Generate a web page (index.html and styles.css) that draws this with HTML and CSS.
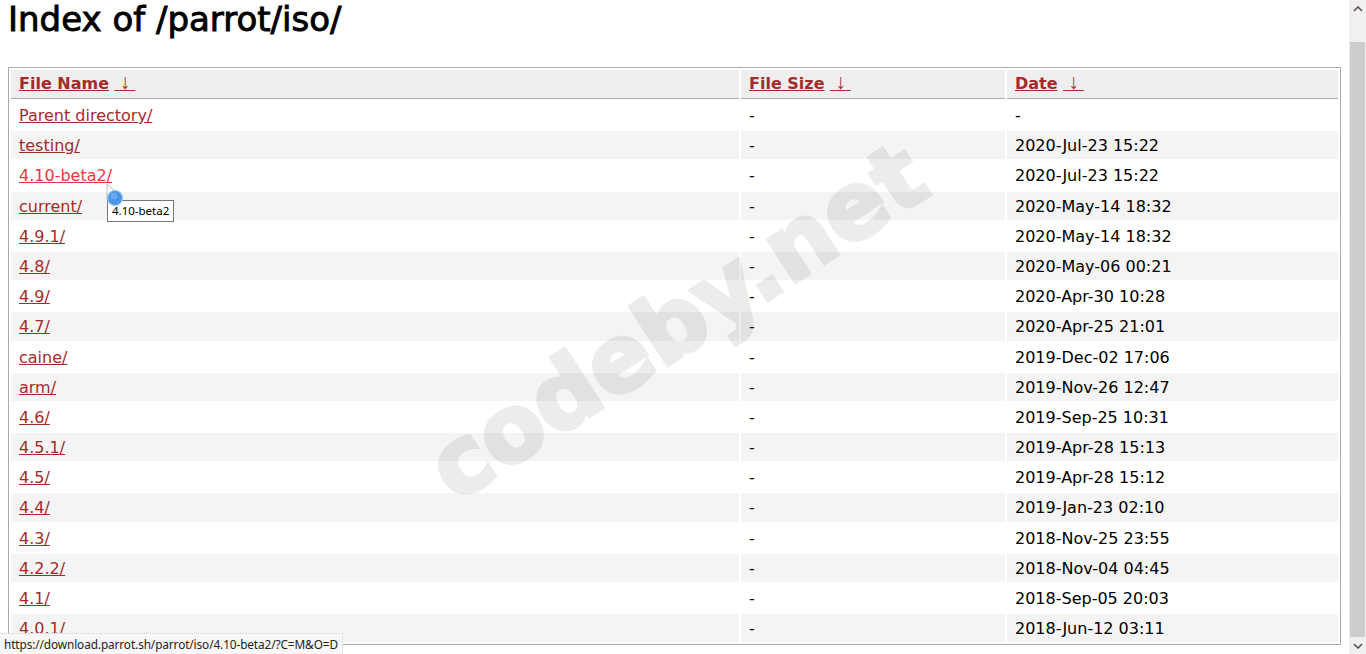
FILE: index.html
```html
<!DOCTYPE html>
<html lang="en">
<head>
<meta charset="utf-8">
<title>Index of /parrot/iso/</title>
<link rel="stylesheet" href="styles.css">
</head>
<body>
<h1 class="title">Index of /parrot/iso/</h1>
<table class="listing">
  <colgroup>
    <col class="c-name"><col class="c-size"><col class="c-date">
  </colgroup>
  <thead>
    <tr>
      <th><a href="#">File Name</a> <a href="#" class="arrow">&nbsp;<span class="ar">↓</span>&nbsp;</a></th>
      <th><a href="#">File Size</a> <a href="#" class="arrow">&nbsp;<span class="ar">↓</span>&nbsp;</a></th>
      <th><a href="#">Date</a> <a href="#" class="arrow">&nbsp;<span class="ar">↓</span>&nbsp;</a></th>
    </tr>
  </thead>
  <tbody>
    <tr><td><a href="#">Parent directory/</a></td><td>-</td><td>-</td></tr>
    <tr><td><a href="#">testing/</a></td><td>-</td><td>2020-Jul-23 15:22</td></tr>
    <tr><td><a href="#" class="hover">4.10-beta2/</a></td><td>-</td><td>2020-Jul-23 15:22</td></tr>
    <tr><td><a href="#">current/</a></td><td>-</td><td>2020-May-14 18:32</td></tr>
    <tr><td><a href="#">4.9.1/</a></td><td>-</td><td>2020-May-14 18:32</td></tr>
    <tr><td><a href="#">4.8/</a></td><td>-</td><td>2020-May-06 00:21</td></tr>
    <tr><td><a href="#">4.9/</a></td><td>-</td><td>2020-Apr-30 10:28</td></tr>
    <tr><td><a href="#">4.7/</a></td><td>-</td><td>2020-Apr-25 21:01</td></tr>
    <tr><td><a href="#">caine/</a></td><td>-</td><td>2019-Dec-02 17:06</td></tr>
    <tr><td><a href="#">arm/</a></td><td>-</td><td>2019-Nov-26 12:47</td></tr>
    <tr><td><a href="#">4.6/</a></td><td>-</td><td>2019-Sep-25 10:31</td></tr>
    <tr><td><a href="#">4.5.1/</a></td><td>-</td><td>2019-Apr-28 15:13</td></tr>
    <tr><td><a href="#">4.5/</a></td><td>-</td><td>2019-Apr-28 15:12</td></tr>
    <tr><td><a href="#">4.4/</a></td><td>-</td><td>2019-Jan-23 02:10</td></tr>
    <tr><td><a href="#">4.3/</a></td><td>-</td><td>2018-Nov-25 23:55</td></tr>
    <tr><td><a href="#">4.2.2/</a></td><td>-</td><td>2018-Nov-04 04:45</td></tr>
    <tr><td><a href="#">4.1/</a></td><td>-</td><td>2018-Sep-05 20:03</td></tr>
    <tr><td><a href="#">4.0.1/</a></td><td>-</td><td>2018-Jun-12 03:11</td></tr>
  </tbody>
</table>

<div class="watermark">codeby.net</div>

<div class="tooltip">4.10-beta2</div>
<div class="cursor">
  <svg width="24" height="30" viewBox="0 0 24 30">
    <path d="M1 1 L1 17 L5 13 L8 20 L11 19 L8 12 L13 12 Z" fill="#fff" stroke="#bbb" stroke-width="1"/>
    <circle cx="9" cy="15" r="7.5" fill="#4a95e6" stroke="#9cc8f5" stroke-width="1.2"/>
    <circle cx="8" cy="13" r="3.5" fill="#74b3f3" opacity="0.7"/>
  </svg>
</div>

<div class="statusbar">https://download.parrot.sh/parrot/iso/4.10-beta2/?C=M&amp;O=D</div>

<div class="scrollbar">
  <div class="sb-btn">
    <svg width="10" height="6" viewBox="0 0 10 6"><path d="M1 5 L5 1 L9 5" fill="none" stroke="#5e4a5e" stroke-width="1.6"/></svg>
  </div>
  <div class="sb-track">
    <div class="sb-thumb"></div>
  </div>
  <div class="sb-btn">
    <svg width="10" height="6" viewBox="0 0 10 6"><path d="M1 1 L5 5 L9 1" fill="none" stroke="#5e4a5e" stroke-width="1.6"/></svg>
  </div>
</div>
</body>
</html>
```

FILE: styles.css
```css
html, body {
  overflow: hidden;
  height: 100%;
}
body {
  margin: 0 25px 0 8px;
  font-family: "DejaVu Sans", "Liberation Sans", sans-serif;
  color: #000;
  background: #fff;
}
.title {
  font-size: 34px;
  font-weight: normal;
  -webkit-text-stroke: 0.9px #000;
  margin: 1px 0 29px 0;
  line-height: 37px;
}
.listing {
  width: 1333px;
  table-layout: fixed;
  border: 1px solid #aaa;
  border-spacing: 2px;
  font-size: 16px;
}
.c-name { width: 728px; }
.c-size { width: 264px; }
.c-date { width: 331px; }
.listing th {
  text-align: left;
  background: #eee;
  padding: 5px 8px 5px 8px;
  line-height: 18px;
  border-bottom: 1px solid #aaa;
  font-weight: bold;
}
.listing td {
  padding: 6px 8px 4px 8px;
  line-height: 18.18px;
  white-space: nowrap;
}
.listing tbody tr:nth-child(even) td {
  background: #f4f4f4;
}
.listing a {
  color: #a52a2a;
  text-decoration: underline;
}
.listing a.hover {
  color: #e8383d;
}
.listing a.arrow {
  font-weight: normal;
}
.listing .ar {
  font-family: "Liberation Sans", sans-serif;
  font-weight: bold;
  font-size: 21px;
  line-height: 0;
}
.watermark {
  position: absolute;
  left: 392px;
  top: 268px;
  font-family: "DejaVu Sans", sans-serif;
  font-weight: bold;
  font-size: 92px;
  letter-spacing: 0px;
  color: #000;
  -webkit-text-stroke: 4px #000;
  opacity: 0.07;
  transform: rotate(-33deg);
  transform-origin: center;
  white-space: nowrap;
  pointer-events: none;
}
.cursor {
  position: absolute;
  left: 106px;
  top: 183px;
  line-height: 0;
}
.tooltip {
  position: absolute;
  left: 107px;
  top: 200px;
  height: 20px;
  padding: 0 4px;
  border: 1px solid #767676;
  background: #fff;
  font-family: "Noto Sans", "Open Sans", sans-serif;
  font-size: 11.5px;
  line-height: 20px;
  color: #000;
}
.statusbar {
  position: fixed;
  left: 0;
  bottom: 0;
  height: 20px;
  padding: 0 4px;
  background: #f7f7f7;
  border-top: 1px dotted #d0d0d0;
  border-right: 1px dotted #d0d0d0;
  font-family: "Noto Sans", "Open Sans", sans-serif;
  font-size: 11.8px;
  letter-spacing: -0.1px;
  line-height: 20px;
  color: #222;
}
.scrollbar {
  position: fixed;
  top: 0;
  right: 0;
  width: 17px;
  height: 100%;
  background: #f0f0f0;
  display: flex;
  flex-direction: column;
}
.sb-btn {
  height: 17px;
  display: flex;
  align-items: center;
  justify-content: center;
  flex: none;
}
.sb-track {
  flex: 1;
  padding: 25px 1px 0 1px;
  display: flex;
}
.sb-thumb {
  flex: 1;
  background: #cdcdcd;
}
```
